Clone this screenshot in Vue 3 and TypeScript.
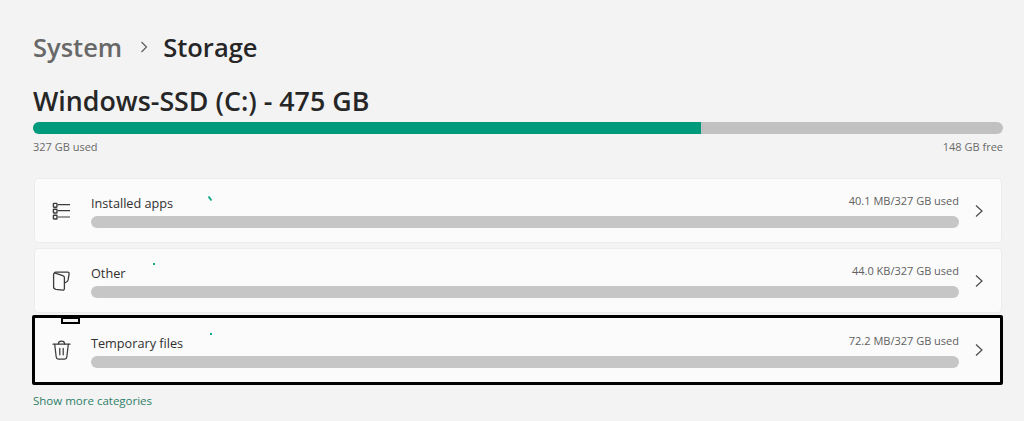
<script setup lang="ts">
interface Category {
  name: string
  used: string
  icon: 'apps' | 'other' | 'trash'
  dot: 'dot-a' | 'dot-b' | 'dot-c'
  focused?: boolean
}

const categories: Category[] = [
  { name: 'Installed apps', used: '40.1 MB/327 GB used', icon: 'apps', dot: 'dot-a' },
  { name: 'Other', used: '44.0 KB/327 GB used', icon: 'other', dot: 'dot-b' },
  { name: 'Temporary files', used: '72.2 MB/327 GB used', icon: 'trash', dot: 'dot-c', focused: true }
]

const usedPercent = (668 / 970) * 100
</script>

<template>
  <main class="page">
    <header class="crumbs">
      <span class="crumb-parent">System</span>
      <svg class="crumb-sep" width="10" height="12" viewBox="0 0 10 12" fill="none">
        <path d="M2.5 1 7.5 6l-5 5" stroke="#5d5d5d" stroke-width="1.2" />
      </svg>
      <span class="crumb-current">Storage</span>
    </header>

    <h1 class="drive">Windows-SSD (C:) - 475 GB</h1>
    <div class="drive-bar">
      <div class="drive-used" :style="{ width: usedPercent + '%' }"></div>
    </div>
    <div class="drive-legend">
      <span>327 GB used</span>
      <span>148 GB free</span>
    </div>

    <ul class="cards">
      <li v-for="cat in categories" :key="cat.name" class="card" :class="{ focused: cat.focused }">
        <span v-if="cat.focused" class="notch"></span>
        <span class="tick" :class="cat.dot"></span>
        <span class="icon">
          <svg v-if="cat.icon === 'apps'" width="20" height="20" viewBox="0 0 20 20" fill="none" stroke="#3c3c3c" stroke-width="1.4">
            <rect x="2.4" y="2.4" width="3.6" height="3.8" rx=".6" />
            <rect x="2.4" y="8.2" width="3.6" height="3.8" rx=".6" />
            <rect x="2.4" y="14.2" width="3.6" height="3.8" rx=".6" />
            <path d="M7 3.6h12M7 9.6h12M7 16h12" stroke-width="1.2" />
          </svg>
          <svg v-else-if="cat.icon === 'other'" width="20" height="20" viewBox="0 0 20 20" fill="none" stroke="#3c3c3c" stroke-width="1.3" stroke-linejoin="round">
            <path d="M2.6 3.4c0-1 .7-1.5 1.6-1.2l7.6 2.4c1 .3 1.6 1 1.6 2v11c0 1-.7 1.6-1.7 1.5l-6.8-.8c-1.4-.2-2.3-1-2.3-2.3z" />
            <path d="M3.4 1.9c.3-.5.8-.8 1.5-.8h11.8c1 0 1.6.8 1.4 1.8l-1 6c-.2 1-.7 1.7-1.7 2.1l-1.9 1" />
          </svg>
          <svg v-else width="20" height="20" viewBox="0 0 20 20" fill="none" stroke="#3c3c3c" stroke-width="1.25" stroke-linecap="round">
            <path d="M2 4.2h17" />
            <path d="M7.4 4c0-1.6 1.3-2.8 3.1-2.8s3.1 1.2 3.1 2.8" />
            <path d="M3.7 4.4 5.2 17c.1 1.2 1 2 2.1 2h6.4c1.1 0 2-.8 2.1-2l1.5-12.6" />
            <path d="M8.8 8.4v6.4M12.2 8.4v6.4" />
          </svg>
        </span>
        <div class="card-body">
          <div class="card-text">
            <span class="card-name">{{ cat.name }}</span>
            <span class="card-used">{{ cat.used }}</span>
          </div>
          <div class="card-bar"></div>
        </div>
        <svg class="chevron" width="10" height="14" viewBox="0 0 10 14" fill="none">
          <path d="M2 1.5 8 7l-6 5.5" stroke="#4a4a4a" stroke-width="1.2" />
        </svg>
      </li>
    </ul>

    <a class="more">Show more categories</a>
  </main>
</template>

<style scoped>
.page {
  width: 1024px;
  height: 421px;
  box-sizing: border-box;
  padding: 28px 21px 0 33px;
  background: #f3f3f3;
  overflow: hidden;
  font-family: "Open Sans", "Noto Sans", sans-serif;
  color: #262626;
}
.crumbs {
  display: flex;
  align-items: center;
  height: 38px;
  font-size: 25.5px;
  font-weight: 600;
}
.crumb-parent {
  color: #686868;
}
.crumb-sep {
  margin: 0 14px 0 17px;
}
.drive {
  margin: 14px 0 0;
  height: 38px;
  line-height: 42px;
  font-size: 26.8px;
  font-weight: 600;
}
.drive-bar {
  margin-top: 4px;
  height: 12px;
  border-radius: 6px;
  background: #c1c1c1;
  overflow: hidden;
}
.drive-used {
  height: 100%;
  background: #009b7c;
}
.drive-legend {
  display: flex;
  justify-content: space-between;
  margin-top: 5px;
  height: 16px;
  line-height: 16px;
  font-size: 11px;
  color: #6a6a6a;
}
.cards {
  list-style: none;
  margin: 23px 0 0;
  padding: 0 1px;
  display: flex;
  flex-direction: column;
  gap: 5px;
}
.card {
  position: relative;
  display: flex;
  align-items: center;
  height: 65px;
  box-sizing: border-box;
  background: #fbfbfb;
  border: 1px solid #ececec;
  border-radius: 4px;
  padding-left: 16px;
}
.card.focused {
  margin: -3px -1px 0 -2px;
  height: 70px;
  border: 3px solid #000;
  border-radius: 2px;
}
.notch {
  position: absolute;
  left: 26px;
  top: -1px;
  width: 19px;
  height: 7px;
  box-sizing: border-box;
  border: 2px solid #000;
  background: #f3f3f3;
}
.tick {
  position: absolute;
  background: #10a98c;
}
.dot-a {
  left: 174px;
  top: 17px;
  width: 2px;
  height: 5px;
  transform: rotate(-35deg);
}
.dot-b {
  left: 118px;
  top: 14px;
  width: 2px;
  height: 2px;
}
.dot-c {
  left: 175px;
  top: 15px;
  width: 2px;
  height: 2px;
}
.icon {
  display: flex;
  width: 20px;
  height: 20px;
  margin-right: 20px;
}
.card-body {
  flex: 1;
  min-width: 0;
}
.card-text {
  display: flex;
  justify-content: space-between;
  align-items: flex-start;
  height: 21px;
}
.card-name {
  font-size: 12.7px;
  line-height: 21px;
  color: #2f2f2f;
}
.card-used {
  font-size: 11px;
  line-height: 15px;
  color: #606060;
}
.card-bar {
  margin-top: 2px;
  height: 12px;
  border-radius: 6px;
  background: #c6c6c6;
}
.chevron {
  margin: 0 17px 0 15px;
}
.focused .card-body {
  margin-top: 1px;
}
.focused .chevron {
  margin-right: 16px;
}
.more {
  display: block;
  margin-top: 7px;
  line-height: 18px;
  font-size: 11.5px;
  font-weight: 500;
  color: #2c8068;
}
</style>

<style>
html, body {
  margin: 0;
  background: #f3f3f3;
}
</style>
